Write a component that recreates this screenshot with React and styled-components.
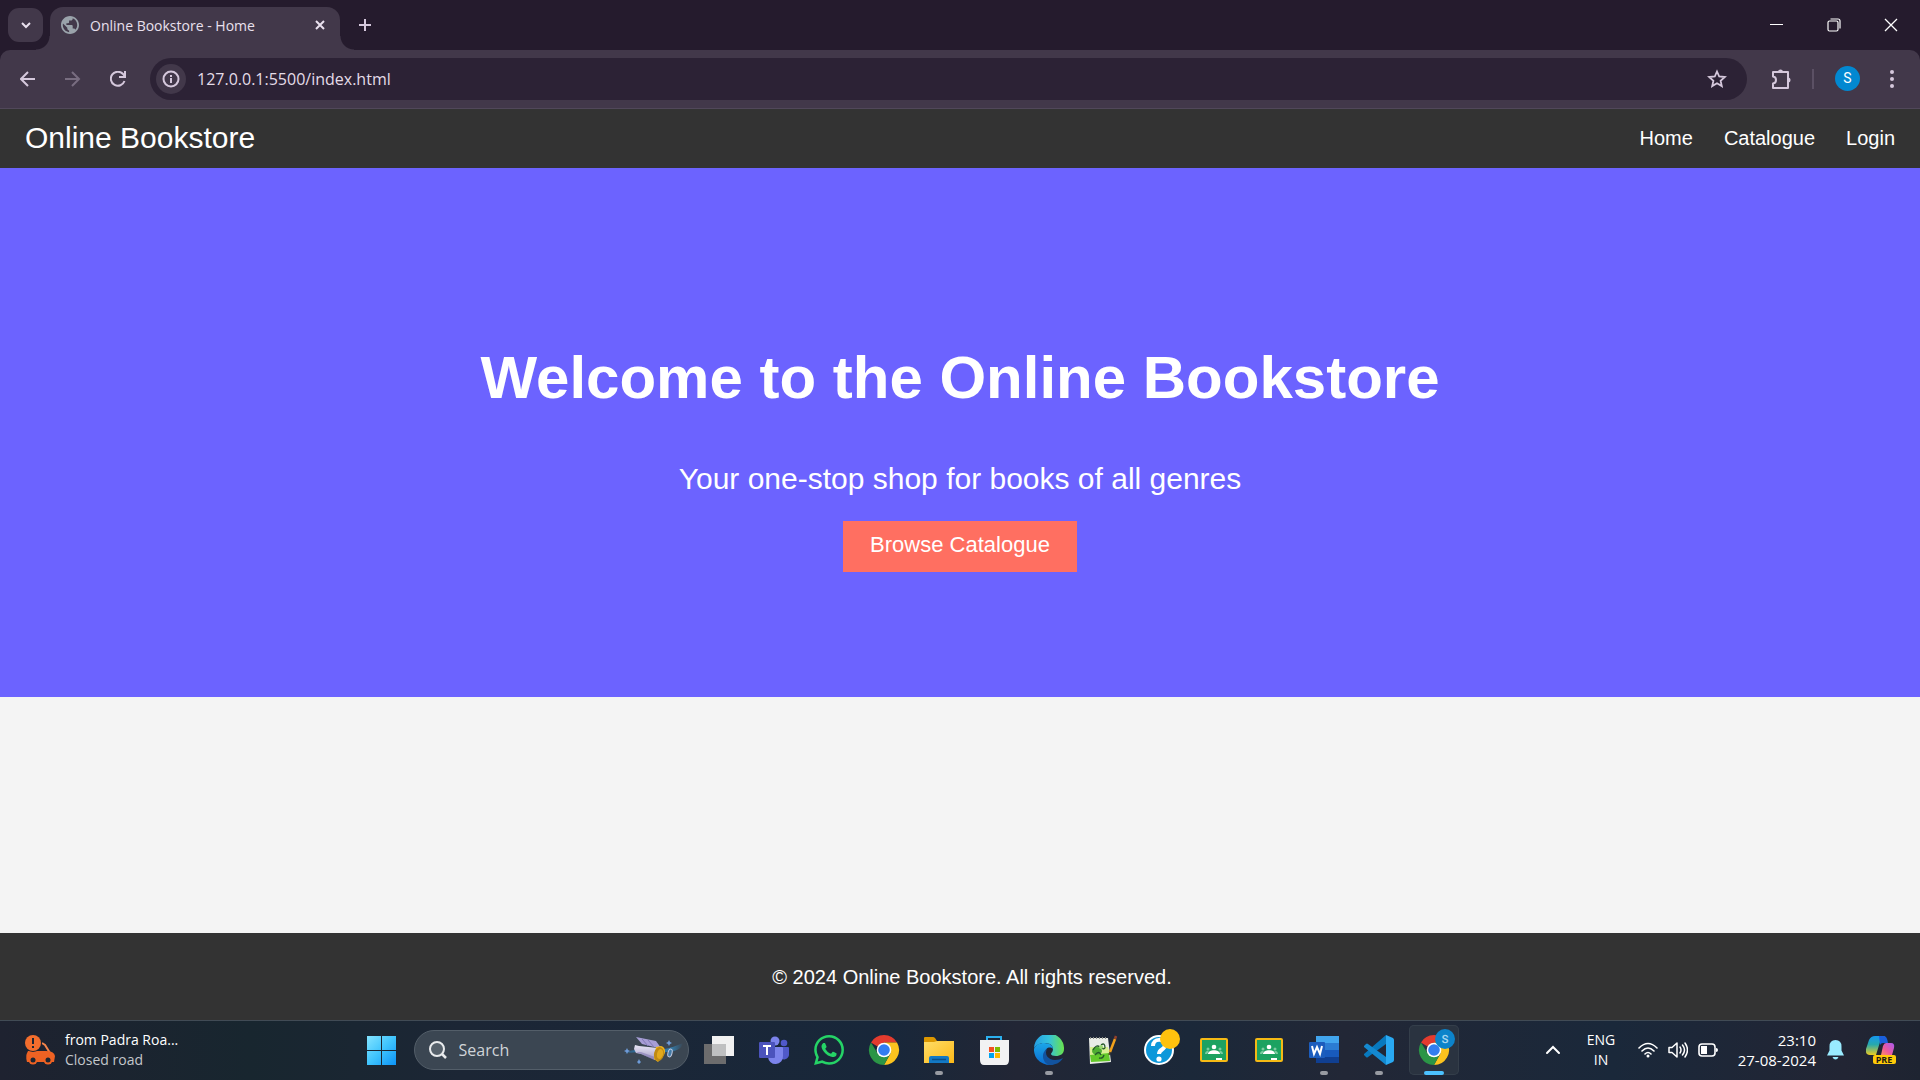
import React from "react";
import styled, { createGlobalStyle } from "styled-components";

const GlobalStyle = createGlobalStyle`
  *, *::before, *::after { box-sizing: border-box; }
  body { margin: 0; background: #f4f4f4; font-family: "Liberation Sans", Arial, sans-serif; }
  button, input { font: inherit; }
  button { border: 0; padding: 0; background: none; color: inherit; }
  h1, p { margin: 0; }
  svg { display: block; flex: none; }
`;

const uiFont = `"Open Sans", "Noto Sans", sans-serif`;

const Screen = styled.div`
  min-height: 100vh;
  display: flex;
  flex-direction: column;
`;

/* ---------- Browser frame ---------- */

const TabStrip = styled.div`
  display: flex;
  align-items: center;
  height: 50px;
  padding-left: 8px;
  background: #251b2d;
  color: #e9e0ee;
  font-family: ${uiFont};
`;

const TabSearch = styled.button`
  display: grid;
  place-items: center;
  width: 35px;
  height: 34px;
  border-radius: 11px;
  background: #42384a;
`;

const Tab = styled.div`
  position: relative;
  display: flex;
  align-items: center;
  align-self: flex-end;
  width: 290px;
  height: 43px;
  margin-left: 7px;
  padding: 0 10px 7px 11px;
  border-radius: 13px 13px 0 0;
  background: #42384a;
  font-size: 14px;

  &::before, &::after {
    content: "";
    position: absolute;
    bottom: 0;
    width: 14px;
    height: 14px;
  }
  &::before {
    right: 100%;
    background: radial-gradient(circle at 0 0, transparent 13px, #42384a 14px);
  }
  &::after {
    left: 100%;
    background: radial-gradient(circle at 100% 0, transparent 13px, #42384a 14px);
  }
`;

const TabTitle = styled.span`
  flex: 1;
  margin-left: 11px;
  white-space: nowrap;
`;

const IconButton = styled.button`
  display: grid;
  place-items: center;
  width: ${(p) => p.$w || 20}px;
  height: ${(p) => p.$h || 20}px;
`;

const NewTab = styled(IconButton)`
  margin-left: 10px;
  color: #d5c8dc;
`;

const WindowControls = styled.div`
  display: flex;
  margin-left: auto;
  padding-right: 1px;
`;

const ToolbarBack = styled.div`
  background: #251b2d;
`;

const Toolbar = styled.div`
  display: flex;
  align-items: center;
  height: 59px;
  padding: 0 8px 1px 6px;
  border-bottom: 1px solid #51485a;
  border-radius: 10px 10px 0 0;
  background: #42384a;
  color: #d5c8dc;
  font-family: ${uiFont};
`;

const AddressBar = styled.div`
  flex: 1;
  display: flex;
  align-items: center;
  height: 42px;
  margin: 0 14px 0 10px;
  padding: 0 10px 0 6px;
  border-radius: 21px;
  background: #2c2235;
`;

const SiteInfo = styled.button`
  display: grid;
  place-items: center;
  width: 30px;
  height: 30px;
  border-radius: 50%;
  background: #42384a;
`;

const Address = styled.input`
  flex: 1;
  min-width: 0;
  margin-left: 11px;
  padding: 0;
  border: 0;
  outline: 0;
  background: none;
  color: #e4dce8;
  font-size: 16px;
`;

const Separator = styled.span`
  width: 2px;
  height: 20px;
  margin: 0 14px 0 11px;
  background: #5b5064;
`;

const Profile = styled.button`
  width: 25px;
  height: 25px;
  margin: 0 12px 0 7px;
  border-radius: 50%;
  background: #0288d1;
  color: #fff;
  font-family: Roboto, sans-serif;
  font-size: 14px;
  line-height: 25px;
`;

/* ---------- Bookstore page ---------- */

const Page = styled.div`
  flex: 1;
  display: flex;
  flex-direction: column;
  color: #fff;
`;

const Header = styled.header`
  display: flex;
  align-items: center;
  justify-content: space-between;
  padding: 12px 25px 13px;
  background: #333;
`;

const Brand = styled.div`
  font-size: 30px;
  line-height: 34px;
`;

const Nav = styled.nav`
  display: flex;
  gap: 31px;
`;

const NavLink = styled.a`
  color: #fff;
  font-size: 20px;
  line-height: 23px;
  text-decoration: none;
`;

const Hero = styled.main`
  padding: 175px 25px 125px;
  background: #6c63ff;
  text-align: center;
`;

const HeroTitle = styled.h1`
  font-size: 60px;
  line-height: 69px;
`;

const HeroText = styled.p`
  margin: 50px 0 25px;
  font-size: 30px;
  line-height: 34px;
`;

const Cta = styled.a`
  display: block;
  width: fit-content;
  margin: 0 auto;
  padding: 11px 27px 15px;
  background: #ff6f61;
  color: #fff;
  font-size: 22px;
  line-height: 25px;
  text-decoration: none;
`;

const Footer = styled.footer`
  margin-top: auto;
  padding: 33px 0 31px 24px;
  background: #333;
  font-size: 20px;
  line-height: 23px;
  text-align: center;
`;

/* ---------- Taskbar ---------- */

const Taskbar = styled.div`
  display: grid;
  grid-template-columns: 354fr auto 459fr;
  align-items: center;
  height: 60px;
  padding-bottom: 1px;
  border-top: 1px solid #414b55;
  background: linear-gradient(90deg, #1e2230 0%, #18262f 13%, #1c2635 24%, #18273a 46%, #222635 53%, #1b2839 62%, #222736 70%, #1a283a 84%, #222534 96%, #1e2431 100%);
  color: #fff;
  font-family: ${uiFont};
  font-size: 14px;
  line-height: 20px;
`;

const Widget = styled.button`
  display: flex;
  align-items: center;
  gap: 10px;
  padding-left: 25px;
  text-align: left;
`;

const Line = styled.span`
  display: block;
  white-space: nowrap;
  color: ${(p) => (p.$dim ? "#c3c7cb" : "#fff")};
`;

const Apps = styled.div`
  display: flex;
  align-items: center;
`;

const SearchBox = styled.label`
  display: flex;
  align-items: center;
  width: 275px;
  height: 40px;
  margin: 0 3px 0 5px;
  padding: 0 4px 0 13px;
  border: 1px solid #535e69;
  border-radius: 20px;
  background: #3b4652;
`;

const SearchInput = styled.input`
  flex: 1;
  min-width: 0;
  margin-left: 11px;
  padding: 0;
  border: 0;
  outline: 0;
  background: none;
  color: #fff;
  font-size: 16px;
  &::placeholder { color: #d0d4d8; opacity: 1; }
`;

const AppButton = styled.button`
  position: relative;
  display: grid;
  place-items: center;
  width: ${(p) => (p.$active ? 50 : 55)}px;
  height: 50px;
  margin: 0 ${(p) => (p.$active ? "3px 0 2px" : "0")};
  border-radius: 5px;
  background: ${(p) => (p.$active ? "#2a3340" : "none")};
  box-shadow: ${(p) => (p.$active ? "inset 0 0 0 1px #343e4a" : "none")};

  &::after {
    content: "";
    display: ${(p) => (p.$mark ? "block" : "none")};
    position: absolute;
    bottom: 0;
    left: calc(50% - ${(p) => (p.$mark || 0) / 2}px);
    width: ${(p) => p.$mark || 0}px;
    height: 4px;
    border-radius: 2px;
    background: ${(p) => (p.$active ? "#4cc2ff" : "#989ba2")};
  }
`;

const Tray = styled.div`
  display: flex;
  align-items: center;
  justify-content: flex-end;
  padding-right: 24px;
`;

const Language = styled.button`
  width: 36px;
  margin: 0 19px 0 20px;
  text-align: center;
`;

const Status = styled.button`
  display: flex;
  align-items: center;
  gap: 10px;
`;

const Clock = styled.button`
  width: 84px;
  margin: 0 11px 0 14px;
  display: flex;
  flex-direction: column;
  align-items: flex-end;
  font-size: 15px;
`;

const Copilot = styled.button`
  margin-left: 22px;
`;

/* ---------- Drawings ---------- */

const Stroke = ({ w = 20, h = w, box = `0 0 ${w} ${h}`, sw = 2, children, ...rest }) => (
  <svg width={w} height={h} viewBox={box} fill="none" stroke="currentColor" strokeWidth={sw} {...rest}>
    {children}
  </svg>
);

const Globe = () => (
  <svg width="18" height="18" viewBox="2 2 20 20" fill="#9aa3ab">
    <path d="M12 2C6.480 2 2 6.480 2 12s4.480 10 10 10 10-4.480 10-10S17.520 2 12 2zm-1 17.930c-3.950-.490-7-3.850-7-7.930 0-.620.080-1.210.210-1.790L9 15v1c0 1.100.900 2 2 2v1.930zm6.900-2.540c-.260-.810-1-1.390-1.900-1.390h-1v-3c0-.550-.450-1-1-1H8v-2h2c.550 0 1-.450 1-1V7h2c1.100 0 2-.900 2-2v-.410c2.930 1.190 5 4.060 5 7.410 0 2.080-.800 3.970-2.100 5.390z" />
  </svg>
);

const StartIcon = () => (
  <svg width="30" height="30" viewBox="0 0 30 30">
    <defs>
      <linearGradient id="start" x1="0" y1="0" x2="1" y2="1" gradientUnits="objectBoundingBox">
        <stop offset="0" stopColor="#84e4ff" />
        <stop offset=".5" stopColor="#3fc4fd" />
        <stop offset="1" stopColor="#0c93f7" />
      </linearGradient>
    </defs>
    <path fill="url(#start)" d="M1 1h14v14H1zM16 1h14v14H16zM1 16h14v14H1zM16 16h14v14H16z" />
  </svg>
);

const Rocket = () => (
  <svg width="60" height="30" viewBox="0 0 60 30">
    <defs>
      <linearGradient id="trail" x1="0" x2="1">
        <stop offset="0" stopColor="#2f84bd" stopOpacity="0" />
        <stop offset=".2" stopColor="#2c6d9d" />
        <stop offset=".8" stopColor="#3387bd" stopOpacity=".8" />
        <stop offset="1" stopColor="#2f84bd" stopOpacity="0" />
      </linearGradient>
      <linearGradient id="hull" x1="0" y1="0" x2="0" y2="1">
        <stop offset="0" stopColor="#e9e7f6" />
        <stop offset="1" stopColor="#a29bc6" />
      </linearGradient>
    </defs>
    <path fill="url(#trail)" d="M0 19c5-4 10-4 16-4 12 2 24 1 43-7-1 6-8 9-17 9-10 3-22-3-42 2z" />
    <path fill="#a79ed6" d="M12 2l20 4 5 7-7-1-12-3z" />
    <path stroke="#8379b8" strokeWidth="1" d="M18 4l6 7M24 5l6 7" />
    <path fill="url(#hull)" d="M11 10l4 1 19 2-3 12-14-6-5-1-2-4z" />
    <path fill="#7970ad" d="M12 17l5 2 13 6 1-3-14-5z" opacity=".5" />
    <path fill="#f0b51c" d="M32 12l5-1c4 1 5 5 3 9l-6 7-4-3z" />
    <ellipse cx="35" cy="19" rx="5" ry="7" transform="rotate(14 35 19)" fill="#c08a12" />
    <ellipse cx="36" cy="19" rx="3" ry="5" transform="rotate(14 36 19)" fill="#e2a91c" />
    <ellipse cx="46" cy="18" rx="2" ry="4" transform="rotate(15 46 18)" fill="#417aa6" stroke="#c5cbe2" />
    <path fill="#6e9bd8" d="M45 5l1 2 2 1-2 1-1 2-1-2-2-1 2-1zM3 13l1 2 2 1-2 1-1 2-1-2-2-1 2-1zM15 24l1 2 1 1-1 1-1 1-1-1-1-1 1-1z" />
  </svg>
);

const TaskView = () => (
  <svg width="30" height="30" viewBox="0 0 30 30">
    <path fill="#6c6c6d" d="M0 9h22v20H0z" />
    <path fill="#f1f1f1" d="M8 1h22v20H8z" />
    <path fill="#bfc0c1" d="M8 9h14v12H8z" />
  </svg>
);

const Teams = () => (
  <svg width="30" height="30" viewBox="0 0 30 30">
    <circle cx="16" cy="6" r="4.500" fill="#7b83eb" />
    <circle cx="25" cy="8" r="3.300" fill="#5059c9" />
    <path fill="#5059c9" d="M20 12h9q1 0 1 1v6a5 5 0 0 1-7 5z" />
    <path fill="#7b83eb" d="M9 12h14q1 0 1 1v8a7.500 7.500 0 0 1-15 1z" />
    <rect y="7" width="16" height="16" rx="1" fill="#4b53bc" />
    <path d="M4 11h8M8 11v9" stroke="#fff" strokeWidth="2" />
  </svg>
);

const WhatsApp = () => (
  <svg width="30" height="30" viewBox="0 0 24 24" fill="#25d366">
    <path d="M17.472 14.382c-.297-.149-1.758-.867-2.030-.967-.273-.099-.471-.148-.670.150-.197.297-.767.966-.940 1.164-.173.199-.347.223-.644.075-.297-.150-1.255-.463-2.390-1.475-.883-.788-1.480-1.761-1.653-2.059-.173-.297-.018-.458.130-.606.134-.133.298-.347.446-.520.149-.174.198-.298.298-.497.099-.198.050-.371-.025-.520-.075-.149-.669-1.612-.916-2.207-.242-.579-.487-.500-.669-.510-.173-.008-.371-.010-.570-.010-.198 0-.520.074-.792.372-.272.297-1.040 1.016-1.040 2.479 0 1.462 1.065 2.875 1.213 3.074.149.198 2.096 3.200 5.077 4.487.709.306 1.262.489 1.694.625.712.227 1.360.195 1.871.118.571-.085 1.758-.719 2.006-1.413.248-.694.248-1.289.173-1.413-.074-.124-.272-.198-.570-.347m-5.421 7.403h-.004a9.870 9.870 0 0 1-5.031-1.378l-.361-.214-3.741.982.998-3.648-.235-.374a9.860 9.860 0 0 1-1.510-5.260c.001-5.450 4.436-9.884 9.888-9.884 2.640 0 5.122 1.030 6.988 2.898a9.825 9.825 0 0 1 2.893 6.994c-.003 5.450-4.437 9.884-9.885 9.884m8.413-18.297A11.815 11.815 0 0 0 12.050 0C5.495 0 .160 5.335.157 11.892c0 2.096.547 4.142 1.588 5.945L.057 24l6.305-1.654a11.882 11.882 0 0 0 5.683 1.448h.005c6.554 0 11.890-5.335 11.893-11.893a11.821 11.821 0 0 0-3.480-8.413z" />
  </svg>
);

const Chrome = ({ badge }) => (
  <svg width="30" height="30" viewBox="0 0 30 30" overflow="visible">
    <path fill="#e33b2e" d="M2 7.500A15 15 0 0 1 28 7.500H15L8.500 11.500z" />
    <path fill="#fcc31e" d="M28 7.500A15 15 0 0 1 15 30L21.500 18.500 15 7.500z" />
    <path fill="#2b9546" d="M2 7.500A15 15 0 0 0 15 30L21 19 9 19z" />
    <circle cx="15" cy="15" r="7.300" fill="#fff" />
    <circle cx="15" cy="15" r="5.800" fill="#327df0" />
    {badge && (
      <>
        <circle cx="26" cy="4" r="10" fill="#0c83ca" />
        <text x="26" y="8" fill="#b4dcf2" stroke="#b4dcf2" strokeWidth=".3" fontFamily="Roboto, sans-serif" fontSize="11" textAnchor="middle">S</text>
      </>
    )}
  </svg>
);

const Folder = () => (
  <svg width="30" height="30" viewBox="0 0 30 30">
    <defs>
      <linearGradient id="folder" x1="0" y1="0" x2="1" y2="1">
        <stop offset="0" stopColor="#ffdd67" />
        <stop offset="1" stopColor="#fdb918" />
      </linearGradient>
    </defs>
    <path fill="#dc9700" d="M0 3q0-1 1-1h8q1 0 2 1l2 3v5H0z" />
    <path fill="url(#folder)" d="M0 7h10l3-1h17v22H0z" />
    <path fill="#1379c5" d="M5 28v-5q0-2 2-2h16q2 0 2 2v5z" />
    <path stroke="#0b4f89" strokeWidth="1.500" d="M8 24.500h14" />
  </svg>
);

const Store = () => (
  <svg width="30" height="30" viewBox="0 0 30 30">
    <path fill="none" stroke="#2bb0ef" strokeWidth="2" d="M8 7V2h14v5" />
    <path fill="#f2f2f3" d="M1 5h29v20q0 5-4 5H5q-4 0-4-5z" />
    <path fill="#f25022" d="M10 12h5v5h-5z" />
    <path fill="#7fba00" d="M16 12h5v5h-5z" />
    <path fill="#00a4ef" d="M10 18h5v5h-5z" />
    <path fill="#ffb900" d="M16 18h5v5h-5z" />
  </svg>
);

const Edge = () => (
  <svg width="30" height="30" viewBox="0 0 30 30">
    <defs>
      <linearGradient id="edgeTop" x1="0" x2="1">
        <stop offset="0" stopColor="#249de3" />
        <stop offset=".5" stopColor="#35c2dc" />
        <stop offset="1" stopColor="#69e34c" />
      </linearGradient>
      <linearGradient id="edgeLeft" x1="0" y1="0" x2="0" y2="1">
        <stop offset="0" stopColor="#1ba6e8" />
        <stop offset="1" stopColor="#0b6bd0" />
      </linearGradient>
    </defs>
    <path fill="url(#edgeTop)" d="M0 13A15 15 0 0 1 30 14c0 5-4 7-8 7-3 0-5-1-5-2s2-2 2-5c0-4-4-6-8-6-5 0-9 2-11 5z" />
    <path fill="url(#edgeLeft)" d="M0 14c1-4 6-6 10-6 6 0 9 3 9 6-3-3-8-1-8 4 0 6 4 11 9 11A15 15 0 0 1 0 14z" />
    <path fill="#12539f" d="M13 14c-3 5 1 11 8 11 3 0 6-1 8-2-3 5-8 7-13 7-7-1-10-12-3-16z" />
  </svg>
);

const NotepadPlus = () => (
  <svg width="30" height="30" viewBox="0 0 30 30">
    <path fill="#e9ece6" d="M0 3h19l3 24-21 2z" />
    <path fill="#d8f092" d="M1 12h18l2 8H1z" />
    <path fill="#63c92a" d="M1 20l19-2 1 8-19 1z" />
    <path stroke="#8d908a" strokeWidth="2" strokeDasharray="1 2" d="M1 3h18" />
    <ellipse cx="8" cy="16" rx="5" ry="4" fill="#4fae32" />
    <path d="M4 15q3-6 7-3t5 1M6 20q4-5 6 0M12 10q4-3 4 3M10 23q4 1 5-3" fill="none" stroke="#24572a" strokeWidth="1.300" />
    <circle cx="12" cy="12" r="2" fill="#9bd873" />
    <path stroke="#f2a11b" strokeWidth="2.500" d="M26 4l-5 13" />
    <path stroke="#93412b" strokeWidth="2.500" d="M27 1l-1 3" />
    <path stroke="#5a4a2a" strokeWidth="1.500" d="M21 17l-1 3" />
  </svg>
);

const Help = () => (
  <svg width="30" height="30" viewBox="0 0 30 30" overflow="visible">
    <circle cx="15" cy="15" r="14" fill="#0d98da" stroke="#fff" strokeWidth="2" />
    <path fill="none" stroke="#fff" strokeWidth="4" d="M9 11c0-8 12-8 12-1 0 5-6 4-6 9" />
    <circle cx="15" cy="24" r="2.600" fill="#fff" />
    <circle cx="26" cy="4" r="10" fill="#ffc20e" />
  </svg>
);

const Classroom = () => (
  <svg width="30" height="30" viewBox="0 0 30 30">
    <rect x="1" y="3" width="28" height="24" rx="2" fill="#f5ba15" />
    <path fill="#1ca261" d="M3 5h24v20H3z" />
    <circle cx="15" cy="12" r="2.300" fill="#fff" />
    <path fill="#fff" d="M9 19c0-5 12-5 12 0z" />
    <g fill="#7bcca0">
      <circle cx="9" cy="14" r="1.500" />
      <circle cx="21" cy="14" r="1.500" />
      <path d="M6 19c0-3 3-4 4-2l-2 2zM24 19c0-3-3-4-4-2l2 2z" />
    </g>
    <path fill="#fff" d="M17 23h6v2h-6z" />
  </svg>
);

const Word = () => (
  <svg width="30" height="30" viewBox="0 0 30 30">
    <path fill="#41a5ee" d="M7 1h23v7H7z" />
    <path fill="#2b7cd3" d="M7 8h23v7H7z" />
    <path fill="#185abd" d="M7 15h23v7H7z" />
    <path fill="#103f91" d="M7 22h23v6H7z" />
    <rect x="0" y="7" width="16" height="16" rx="1" fill="#1c5dbd" />
    <path fill="none" stroke="#fff" strokeWidth="2" d="M3 11l2 8 3-7 3 7 2-8" />
  </svg>
);

const VsCode = () => (
  <svg width="30" height="30" viewBox="0 0 30 30">
    <path fill="#0879be" d="M22 0v9L4 22q-1 1-2 0l-2-2v-1z" />
    <path fill="#1489d0" d="M0 11l2-2q1-1 2 0l18 13v8L0 12z" />
    <path fill="#29a9f2" d="M22 0l7 3q1 1 1 2v20q0 1-1 2l-7 3z" />
  </svg>
);

const CopilotIcon = () => (
  <svg width="30" height="30" viewBox="0 0 30 30">
    <defs>
      <linearGradient id="copA" x1="0" y1="0" x2="0" y2="1">
        <stop offset="0" stopColor="#1598ef" />
        <stop offset=".45" stopColor="#27a9ad" />
        <stop offset="1" stopColor="#edcc20" />
      </linearGradient>
      <linearGradient id="copB" x1="1" y1="0" x2="0" y2="1">
        <stop offset="0" stopColor="#a85af2" />
        <stop offset=".6" stopColor="#ee5a9b" />
        <stop offset="1" stopColor="#fc9460" />
      </linearGradient>
    </defs>
    <path fill="url(#copA)" d="M9 1h10l-5 6-4 13H4q-5 0-4-6l3-9q2-4 6-4z" />
    <path fill="#1a5fdc" d="M13 1h5q3 0 4 7h-5q-2 0-3 2z" />
    <path fill="url(#copB)" d="M20 8h5q4 0 3 5l-2 7H15l2-9q1-3 3-3z" />
    <rect x="7" y="20" width="23" height="9" rx="2" fill="#ffca08" />
    <text x="18" y="28" textAnchor="middle" fontFamily="Open Sans, sans-serif" fontWeight="700" fontSize="9" fill="#1c1a12">PRE</text>
  </svg>
);

const RoadAlert = () => (
  <svg width="30" height="30" viewBox="0 0 30 30">
    <path fill="none" stroke="#f5854c" strokeWidth="2" d="M17 8l3 2 5 8" />
    <path fill="#ee6223" d="M3 16h18q8 0 9 5l-1 6H2q-2-6 1-11z" />
    <circle cx="8" cy="25" r="4.500" fill="#ee6223" />
    <circle cx="23" cy="25" r="4.500" fill="#ee6223" />
    <circle cx="8" cy="25" r="2.500" fill="#1c2531" />
    <circle cx="23" cy="25" r="2.500" fill="#1c2531" />
    <circle cx="8" cy="8" r="9" fill="#1c2531" />
    <circle cx="8" cy="8" r="8" fill="#f26d2d" />
    <path stroke="#1c2531" strokeWidth="2" d="M8 3v6M8 11v2" />
  </svg>
);

const apps = [
  { name: "Task view", Icon: TaskView },
  { name: "Microsoft Teams", Icon: Teams },
  { name: "WhatsApp", Icon: WhatsApp },
  { name: "Google Chrome", Icon: Chrome },
  { name: "File Explorer", Icon: Folder, mark: 8 },
  { name: "Microsoft Store", Icon: Store },
  { name: "Microsoft Edge", Icon: Edge, mark: 8 },
  { name: "Notepad++", Icon: NotepadPlus },
  { name: "Help", Icon: Help },
  { name: "Classroom", Icon: Classroom },
  { name: "Classroom 2", Icon: Classroom },
  { name: "Word", Icon: Word, mark: 8 },
  { name: "Visual Studio Code", Icon: VsCode, mark: 8 },
  { name: "Google Chrome, profile S", Icon: () => <Chrome badge />, mark: 20, active: true },
];

const BrowserFrame = () => (
  <>
    <TabStrip>
      <TabSearch aria-label="Search tabs">
        <Stroke w={14}><path d="M3 5l4 4 4-4" /></Stroke>
      </TabSearch>
      <Tab>
        <Globe />
        <TabTitle>Online Bookstore - Home</TabTitle>
        <IconButton aria-label="Close tab">
          <Stroke w={12}><path d="M2 2l8 8M10 2l-8 8" /></Stroke>
        </IconButton>
      </Tab>
      <NewTab $w={30} $h={30} aria-label="New tab">
        <Stroke w={14}><path d="M7 1v12M1 7h12" /></Stroke>
      </NewTab>
      <WindowControls>
        <IconButton $w={57} $h={50} aria-label="Minimise">
          <Stroke w={13} sw={1} stroke="#fff"><path d="M0 5.500h13" /></Stroke>
        </IconButton>
        <IconButton $w={57} $h={50} aria-label="Restore">
          <Stroke w={14} sw={1.2} stroke="#fff">
            <rect x="1" y="3" width="10" height="10" rx="1.500" />
            <path d="M3.500 1H11q2 0 2 2v7.500" />
          </Stroke>
        </IconButton>
        <IconButton $w={57} $h={50} aria-label="Close">
          <Stroke w={14} sw={1.3} stroke="#fff"><path d="M1 1l12 12M13 1L1 13" /></Stroke>
        </IconButton>
      </WindowControls>
    </TabStrip>
    <ToolbarBack>
      <Toolbar>
        <IconButton $w={44} $h={40} aria-label="Back">
          <Stroke w={16}><path d="M15 8H2M8 1L1 8l7 7" /></Stroke>
        </IconButton>
        <IconButton $w={46} $h={40} aria-label="Forward">
          <Stroke w={16} stroke="#786d80"><path d="M0 8h14M7 1l7 7-7 7" /></Stroke>
        </IconButton>
        <IconButton $w={44} $h={40} aria-label="Reload">
          <Stroke w={16}>
            <path d="M14.500 10A7 7 0 1 1 13 3l1.500 2" />
            <path d="M15 0v6H9" />
          </Stroke>
        </IconButton>
        <AddressBar>
          <SiteInfo aria-label="Site information">
            <Stroke w={18}>
              <circle cx="9" cy="9" r="7.500" />
              <path d="M9 8v5M9 5v2" />
            </Stroke>
          </SiteInfo>
          <Address aria-label="Address" defaultValue="127.0.0.1:5500/index.html" />
          <IconButton $w={40} $h={40} aria-label="Bookmark this page">
            <Stroke w={20} sw={1.8}>
              <path d="M10 2.500l2.200 5 5.600.5-4.200 3.700 1.200 5.400L10 14.300l-4.800 2.800 1.200-5.400L2.200 8l5.600-.5z" />
            </Stroke>
          </IconButton>
        </AddressBar>
        <IconButton $w={40} $h={40} aria-label="Extensions">
          <Stroke w={22}>
            <path strokeLinejoin="round" d="M3 4h15v16H3v-4.500c4-.5 4-6.500 0-7z" />
            <path fill="currentColor" stroke="none" d="M8 4a2.500 2.500 0 0 1 5 0zM18 9.500a2.500 2.500 0 0 1 0 5z" />
          </Stroke>
        </IconButton>
        <Separator />
        <Profile aria-label="Profile">S</Profile>
        <IconButton $w={40} $h={40} aria-label="Menu">
          <svg width="4" height="18" viewBox="0 0 4 18" fill="currentColor">
            <circle cx="2" cy="2" r="2" /><circle cx="2" cy="9" r="2" /><circle cx="2" cy="16" r="2" />
          </svg>
        </IconButton>
      </Toolbar>
    </ToolbarBack>
  </>
);

const Bookstore = () => (
  <Page>
    <Header>
      <Brand>Online Bookstore</Brand>
      <Nav>
        <NavLink href="#home">Home</NavLink>
        <NavLink href="#catalogue">Catalogue</NavLink>
        <NavLink href="#login">Login</NavLink>
      </Nav>
    </Header>
    <Hero>
      <HeroTitle>Welcome to the Online Bookstore</HeroTitle>
      <HeroText>Your one-stop shop for books of all genres</HeroText>
      <Cta href="#catalogue">Browse Catalogue</Cta>
    </Hero>
    <Footer>© 2024 Online Bookstore. All rights reserved.</Footer>
  </Page>
);

const SystemBar = () => (
  <Taskbar>
    <Widget>
      <RoadAlert />
      <span>
        <Line>from Padra Roa...</Line>
        <Line $dim>Closed road</Line>
      </span>
    </Widget>
    <Apps>
      <AppButton aria-label="Start"><StartIcon /></AppButton>
      <SearchBox>
        <Stroke w={20} stroke="#e9ebed">
          <circle cx="9" cy="9" r="7" fill="#56616b" />
          <path strokeWidth="2.500" d="M14 14l4 4" />
        </Stroke>
        <SearchInput aria-label="Search" placeholder="Search" />
        <Rocket />
      </SearchBox>
      {apps.map(({ name, Icon, mark, active }) => (
        <AppButton key={name} aria-label={name} $mark={mark} $active={active}>
          <Icon />
        </AppButton>
      ))}
    </Apps>
    <Tray>
      <IconButton aria-label="Show hidden icons">
        <Stroke w={16}><path strokeLinecap="round" d="M2 11l6-6 6 6" /></Stroke>
      </IconButton>
      <Language>
        <Line>ENG</Line>
        <Line>IN</Line>
      </Language>
      <Status aria-label="Network, volume, battery">
        <Stroke w={20} sw={1.6}>
          <path strokeLinecap="round" d="M1 8q9-9 18 0M4 11q6-6 12 0M7 14q3-3 6 0" />
          <circle cx="10" cy="16" r="1.500" fill="currentColor" stroke="none" />
        </Stroke>
        <Stroke w={20} sw={1.5}>
          <path strokeLinejoin="round" strokeLinecap="round" d="M1 7.500h3L9 3v14l-5-4.500H1zM12 7q2 3 0 6M14.500 5q4 5 0 10M17 3q5 7 0 14" />
        </Stroke>
        <Stroke w={20} sw={1.6}>
          <rect x="1" y="4" width="16" height="12" rx="3" />
          <path fill="currentColor" stroke="none" d="M3 6h6v8H3zM18 8q2 0 2 2t-2 2z" />
        </Stroke>
      </Status>
      <Clock>
        <Line>23:10</Line>
        <Line>27-08-2024</Line>
      </Clock>
      <IconButton $w={17} aria-label="Notifications">
        <svg width="17" height="20" viewBox="0 0 17 20" fill="#99ebff">
          <path d="M8.500 0q6 0 6 6.500v4l2.500 5H0l2.500-5v-4Q2.500 0 8.500 0zM5.500 17h6q-1 2.500-3 2.500t-3-2.500z" />
        </svg>
      </IconButton>
      <Copilot aria-label="Copilot"><CopilotIcon /></Copilot>
    </Tray>
  </Taskbar>
);

export default function App() {
  return (
    <Screen>
      <GlobalStyle />
      <BrowserFrame />
      <Bookstore />
      <SystemBar />
    </Screen>
  );
}
